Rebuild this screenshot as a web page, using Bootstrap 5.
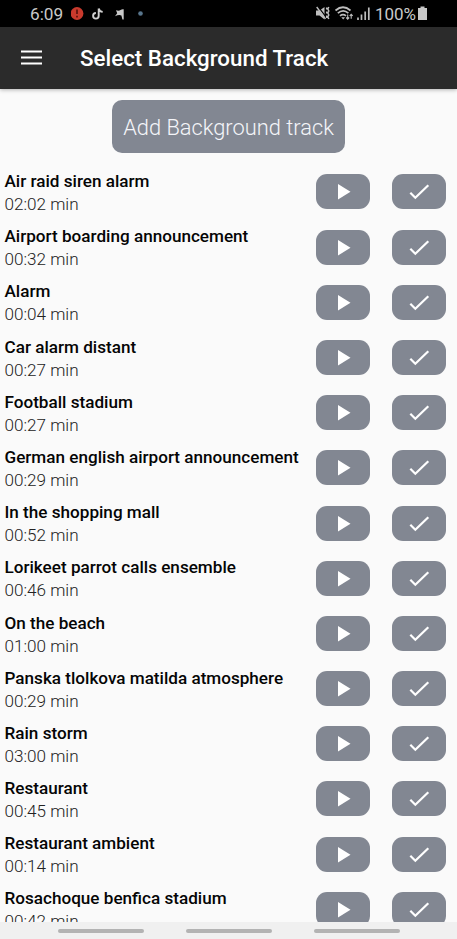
<!DOCTYPE html>
<html lang="en">
<head>
<meta charset="utf-8">
<meta name="viewport" content="width=device-width, initial-scale=1">
<title>Select Background Track</title>
<link href="https://cdn.jsdelivr.net/npm/bootstrap@5.3.0/dist/css/bootstrap.min.css" rel="stylesheet">
<style>
body{font-family:Roboto,sans-serif;background:#fafafa;color:#050505}
svg{display:block;flex:none}
.screen{height:939px;width:457px}
.status{height:27px;background:#000;color:#c9c9c9;padding:0 29px 0 30px}
.clock{font-size:17.2px;line-height:27px;width:33px;padding-top:1px;white-space:nowrap}
.batt-text{font-size:17px;line-height:27px;padding-top:1px;margin-left:2px;white-space:nowrap}
.appbar{height:62px;background:#2b2b2b;padding-left:21px;box-shadow:0 1px 4px rgba(0,0,0,.28);z-index:1}
.appbar h1{font-size:22.35px;line-height:30px;font-weight:500;margin-left:38px}
.btn-slate{background:#828792;color:#fff;border:0}
.btn-slate:hover{background:#747985;color:#fff}
.add{width:233px;height:53px;border-radius:10px;font-size:21.85px;font-weight:300;color:#f4f5f9;margin-top:11px;white-space:nowrap}
.add span{padding-top:3px}
.tracks{margin-top:11.3px}
.track{height:55.2px;padding:0 11px 0 4.5px}
.track-name{font-size:17.13px;line-height:23px;font-weight:500}
.track-time{font-size:17.1px;line-height:23px;font-weight:300;color:#222}
.track-text{padding-top:2.3px;white-space:nowrap}
.act{width:54px;height:35px;border-radius:11px}
.acts{gap:22px}
.navhint{height:17px;background:#f0f0f0;gap:42px;padding-top:1px}
.pill{width:86px;height:4px;background:#b3b3b3}
</style>
<script src="https://cdn.jsdelivr.net/npm/bootstrap@5.3.0/dist/js/bootstrap.bundle.min.js"></script>
</head>
<body>
<svg width="0" height="0" class="position-absolute" aria-hidden="true">
<symbol id="play" viewBox="0 0 54 35"><path d="M22 10v15.500l12.500-7.750z" fill="#fff"/></symbol>
<symbol id="check" viewBox="0 0 54 35"><path d="M18.300 18.800l5 5L36.300 11.200" fill="none" stroke="#fff" stroke-width="2.200"/></symbol>
</svg>
<div class="screen d-flex flex-column overflow-hidden">
<div class="status d-flex align-items-center flex-shrink-0">
<span class="clock">6:09</span>
<svg class="ms-2" width="80" height="27" viewBox="0 0 80 27">
<circle cx="6" cy="13.500" r="6.400" fill="#c93a2d"/><path d="M6 9.500v4.500M6 15.700v1.800" stroke="#5c130e" stroke-width="1.700"/>
<path d="M27.700 8.500v7.300a2.800 2.800 0 1 1-2.800-2.800M27.700 8.500q.7 3.200 4 3.400" fill="none" stroke="#d0d0d0" stroke-width="1.900"/>
<path d="M45 10.200q3 1 4.500-.2 1.700-1.200 3.200-.7V19.500h-1.300l-1-3.900q-2-1.300-6.400.6l2.200-2.900z" fill="#c8c8c8"/>
<circle cx="69.500" cy="13.500" r="2.300" fill="#58758c"/>
</svg>
<svg class="ms-auto" width="57" height="27" viewBox="0 0 57 27" fill="none" stroke="#bdbdbd">
<path d="M0 10.500h3.500L8.500 7v12.500L3.500 15.500H0z" fill="#bdbdbd" stroke="none"/><path d="M1.800 6.300l8.500 11" stroke="#000" stroke-width="1.200"/><path d="M.7 7l8.800 11.800" stroke-width="1.400"/><path d="M10.700 7.500v2M10.700 11.500v2M10.700 15.500v2.500M12.800 7l-1 2 1 2-1 2 1 2-1 2 1 2" stroke-width="1.500"/>
<path d="M19.500 10.500q7.500-6.500 15 0M21.800 13.200q5.400-4.600 10.600 0M24 15.900q3-2.500 6 0" stroke-width="1.700"/><path d="M27.200 19.500l-1.900-2.200h3.800z" fill="#bdbdbd" stroke="none"/><path d="M31.700 14.500v4.500m-1.500-1.500l1.500 1.600 1.500-1.600M35.200 18.800v-4.500m-1.500 1.500l1.500-1.600 1.500 1.600" stroke-width="1.100"/>
<path d="M42 17.500v2.500M45.500 14.500v5.500M49.200 11.500v8.500M52.800 7.500v12.500" stroke-width="1.700"/>
</svg>
<span class="batt-text">100%</span>
<svg width="12" height="27" viewBox="1 0 12 27"><path d="M5.500 6.500h4V8H12v12H3V8h2.500z" fill="#c8c8c8"/></svg>
</div>
<header class="appbar d-flex align-items-center flex-shrink-0 text-white position-relative">
<svg width="21" height="16" viewBox="0 0 21 16" role="img" aria-label="Menu"><path d="M0 1.500h21M0 7.500h21M0 13.500h21" stroke="#fff" stroke-width="2.200"/></svg>
<h1 class="mb-0">Select Background Track</h1>
</header>
<main class="flex-grow-1 overflow-hidden d-flex flex-column">
<button class="btn btn-slate add align-self-center flex-shrink-0 p-0"><span class="d-block">Add Background track</span></button>
<div class="tracks" id="tracks"></div>
</main>
<footer class="navhint d-flex align-items-center justify-content-center flex-shrink-0"><span class="pill rounded-pill"></span><span class="pill rounded-pill"></span><span class="pill rounded-pill"></span></footer>
</div>
<script>
const tracks = [
["Air raid siren alarm","02:02"],["Airport boarding announcement","00:32"],["Alarm","00:04"],
["Car alarm distant","00:27"],["Football stadium","00:27"],["German english airport announcement","00:29"],
["In the shopping mall","00:52"],["Lorikeet parrot calls ensemble","00:46"],["On the beach","01:00"],
["Panska tlolkova matilda atmosphere","00:29"],["Rain storm","03:00"],["Restaurant","00:45"],
["Restaurant ambient","00:14"],["Rosachoque benfica stadium","00:42"]];
document.getElementById("tracks").innerHTML = tracks.map(([name, time]) => `
<div class="track d-flex align-items-center justify-content-between">
<div class="track-text"><div class="track-name">${name}</div><div class="track-time">${time} min</div></div>
<div class="acts d-flex">
<button class="btn btn-slate act p-0" aria-label="Play"><svg width="54" height="35"><use href="#play"/></svg></button>
<button class="btn btn-slate act p-0" aria-label="Select"><svg width="54" height="35"><use href="#check"/></svg></button>
</div></div>`).join("");
</script>
</body>
</html>
